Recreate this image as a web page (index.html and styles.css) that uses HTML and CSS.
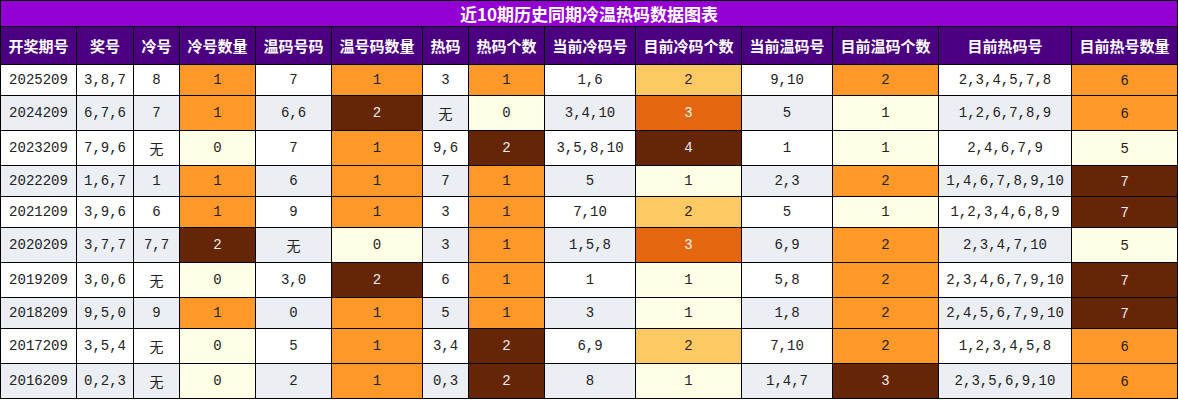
FILE: index.html
```html
<!DOCTYPE html>
<html>
<head>
<meta charset="utf-8">
<link rel="stylesheet" href="styles.css">
</head>
<body>
<table class="tbl">
<colgroup>
<col style="width:76px"><col style="width:57px"><col style="width:46px"><col style="width:76px"><col style="width:76px"><col style="width:91px"><col style="width:46px"><col style="width:76px"><col style="width:91px"><col style="width:106px"><col style="width:91px"><col style="width:106px"><col style="width:133px"><col style="width:106px">
</colgroup>
<thead>
<tr><th class="title" colspan="14">近10期历史同期冷温热码数据图表</th></tr>
<tr class="head">
<th>开奖期号</th><th>奖号</th><th>冷号</th><th>冷号数量</th><th>温码号码</th><th>温号码数量</th><th>热码</th><th>热码个数</th><th>当前冷码号</th><th>目前冷码个数</th><th>当前温码号</th><th>目前温码个数</th><th>目前热码号</th><th>目前热号数量</th>
</tr>
</thead>
<tbody>
<tr><td>2025209</td><td>3,8,7</td><td>8</td><td class="c4">1</td><td>7</td><td class="c4">1</td><td>3</td><td class="c4">1</td><td>1,6</td><td class="c3">2</td><td>9,10</td><td class="c4">2</td><td>2,3,4,5,7,8</td><td class="c4 last">6</td></tr>
<tr><td>2024209</td><td>6,7,6</td><td>7</td><td class="c4">1</td><td>6,6</td><td class="c6">2</td><td>无</td><td class="c1">0</td><td>3,4,10</td><td class="c5">3</td><td>5</td><td class="c1">1</td><td>1,2,6,7,8,9</td><td class="c4 last">6</td></tr>
<tr><td>2023209</td><td>7,9,6</td><td>无</td><td class="c1">0</td><td>7</td><td class="c4">1</td><td>9,6</td><td class="c6">2</td><td>3,5,8,10</td><td class="c6">4</td><td>1</td><td class="c1">1</td><td>2,4,6,7,9</td><td class="c1 last">5</td></tr>
<tr><td>2022209</td><td>1,6,7</td><td>1</td><td class="c4">1</td><td>6</td><td class="c4">1</td><td>7</td><td class="c4">1</td><td>5</td><td class="c1">1</td><td>2,3</td><td class="c4">2</td><td>1,4,6,7,8,9,10</td><td class="c6 last">7</td></tr>
<tr><td>2021209</td><td>3,9,6</td><td>6</td><td class="c4">1</td><td>9</td><td class="c4">1</td><td>3</td><td class="c4">1</td><td>7,10</td><td class="c3">2</td><td>5</td><td class="c1">1</td><td>1,2,3,4,6,8,9</td><td class="c6 last">7</td></tr>
<tr><td>2020209</td><td>3,7,7</td><td>7,7</td><td class="c6">2</td><td>无</td><td class="c1">0</td><td>3</td><td class="c4">1</td><td>1,5,8</td><td class="c5">3</td><td>6,9</td><td class="c4">2</td><td>2,3,4,7,10</td><td class="c1 last">5</td></tr>
<tr><td>2019209</td><td>3,0,6</td><td>无</td><td class="c1">0</td><td>3,0</td><td class="c6">2</td><td>6</td><td class="c4">1</td><td>1</td><td class="c1">1</td><td>5,8</td><td class="c4">2</td><td>2,3,4,6,7,9,10</td><td class="c6 last">7</td></tr>
<tr><td>2018209</td><td>9,5,0</td><td>9</td><td class="c4">1</td><td>0</td><td class="c4">1</td><td>5</td><td class="c4">1</td><td>3</td><td class="c1">1</td><td>1,8</td><td class="c4">2</td><td>2,4,5,6,7,9,10</td><td class="c6 last">7</td></tr>
<tr><td>2017209</td><td>3,5,4</td><td>无</td><td class="c1">0</td><td>5</td><td class="c4">1</td><td>3,4</td><td class="c6">2</td><td>6,9</td><td class="c3">2</td><td>7,10</td><td class="c4">2</td><td>1,2,3,4,5,8</td><td class="c4 last">6</td></tr>
<tr><td>2016209</td><td>0,2,3</td><td>无</td><td class="c1">0</td><td>2</td><td class="c4">1</td><td>0,3</td><td class="c6">2</td><td>8</td><td class="c1">1</td><td>1,4,7</td><td class="c6">3</td><td>2,3,5,6,9,10</td><td class="c4 last">6</td></tr>
</tbody>
</table>
</body>
</html>
```
FILE: styles.css
```css
html, body {
  margin: 0;
  padding: 0;
  background: #fff;
}
.tbl {
  border-collapse: collapse;
  table-layout: fixed;
  width: 1178px;
  font-family: "Liberation Mono", "Noto Sans CJK SC", monospace;
  font-size: 14px;
  color: #222;
}
.tbl th, .tbl td {
  border: 1px solid #000;
  text-align: center;
  padding: 0;
  white-space: nowrap;
}
.title {
  background: #9400d3;
  color: #fff;
  font-family: "Noto Sans CJK SC", sans-serif;
  font-weight: bold;
  font-size: 17px;
  height: 25px;
  line-height: 24px;
}
.head th {
  background: #4b0082;
  color: #fff;
  font-family: "Noto Sans CJK SC", sans-serif;
  font-weight: bold;
  font-size: 15px;
  height: 37px;
}
.tbl td {
  padding: 7px 0;
  background: #fff;
}
.tbl tbody tr:nth-child(even) td {
  background: #ebeef2;
}
.tbl tbody tr td.c1 { background: #ffffe5; }
.tbl tbody tr td.c3 { background: #fec862; }
.tbl tbody tr td.c4 { background: #fe9929; }
.tbl tbody tr td.c5 { background: #e4670f; color: #f4f4f4; }
.tbl tbody tr td.c6 { background: #662506; color: #eee; }
.tbl td.last {
  font-family: "Liberation Sans", "Noto Sans CJK SC", sans-serif;
}
```
